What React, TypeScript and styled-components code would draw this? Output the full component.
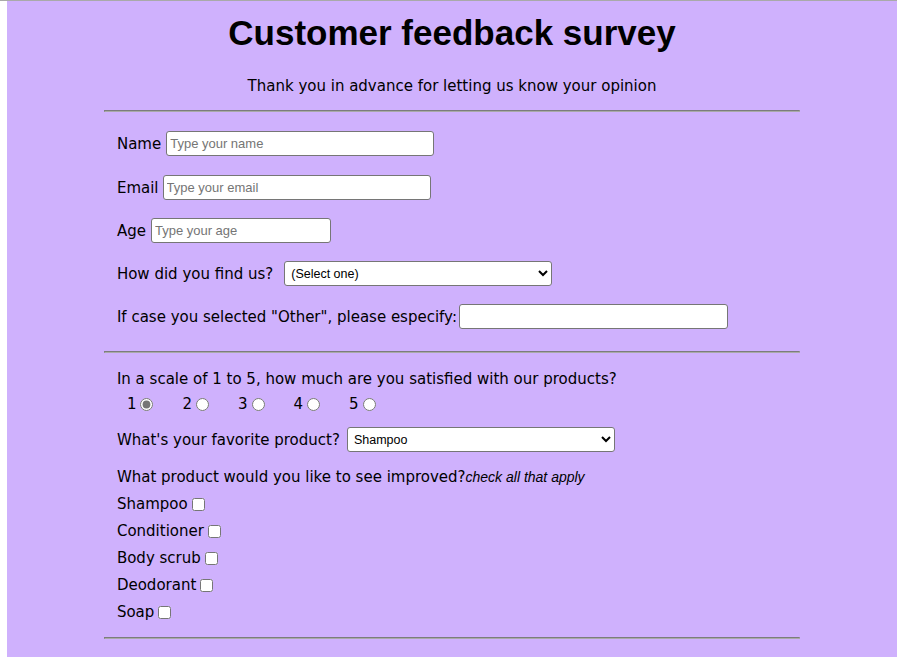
import React from "react";
import styled, { createGlobalStyle } from "styled-components";

const GlobalStyle = createGlobalStyle`
  html, body {
    margin: 0;
    padding: 0;
    background: #ffffff;
  }
  body {
    border-top: 1px solid #a9a9a9;
    font-family: "DejaVu Sans", Verdana, sans-serif;
    color: #000;
  }
`;

const Page = styled.div`
  margin-left: 7px;
  background: #cfb1fd;
  min-height: calc(100vh - 1px);
  overflow: hidden;
`;

const Title = styled.h1`
  margin: 12px 0 0;
  font-family: "Liberation Sans", Arial, sans-serif;
  font-size: 35px;
  line-height: 40px;
  font-weight: bold;
  text-align: center;
`;

const Subtitle = styled.p`
  margin: 24px 0 0;
  font-size: 15px;
  line-height: 18px;
  text-align: center;
`;

const Rule = styled.hr<{ $top?: number }>`
  width: 78%;
  margin: ${(p) => p.$top ?? 0}px auto 0;
  border-style: solid;
  border-width: 1px;
  border-color: #7c7c7c #a9a9a9 #a9a9a9 #7c7c7c;
  height: 0;
`;

const Section = styled.div<{ $pt: number; $pb: number }>`
  width: 78%;
  margin: 0 auto;
  box-sizing: border-box;
  padding: ${(p) => p.$pt}px 0 ${(p) => p.$pb}px 12px;
  font-size: 15px;
`;

const FieldRow = styled.div<{ $gap: number; $mb?: number; $mt?: number }>`
  display: flex;
  align-items: center;
  height: 25px;
  gap: ${(p) => p.$gap}px;
  margin-top: ${(p) => p.$mt ?? 0}px;
  margin-bottom: ${(p) => p.$mb ?? 0}px;
  line-height: 18px;
`;

const Label = styled.label`
  font-size: 15px;
  line-height: 18px;
  white-space: nowrap;
`;

const TextInput = styled.input<{ $w: number }>`
  box-sizing: border-box;
  width: ${(p) => p.$w}px;
  height: 25px;
  padding: 1px 3px;
  border: 1px solid #767676;
  border-radius: 3px;
  background: #fff;
  font-family: "Liberation Sans", Arial, sans-serif;
  font-size: 13px;
  &::placeholder {
    color: #757575;
  }
`;

const Select = styled.select`
  box-sizing: border-box;
  width: 268px;
  height: 25px;
  border: 1px solid #767676;
  border-radius: 3px;
  background: #fff;
  font-family: "Liberation Sans", Arial, sans-serif;
  font-size: 12.5px;
  color: #000;
  padding: 0 2px;
`;

const Line = styled.div<{ $mt?: number }>`
  font-size: 15px;
  line-height: 18px;
  margin-top: ${(p) => p.$mt ?? 0}px;
`;

const RadioRow = styled.div`
  display: flex;
  align-items: center;
  height: 18px;
  margin-top: 7px;
  padding-left: 10px;
  gap: 26px;
`;

const Option = styled.label`
  display: flex;
  align-items: center;
  font-size: 15px;
  line-height: 18px;
`;

const Radio = styled.input`
  width: 13px;
  height: 13px;
  margin: 0 3px 0 4px;
  accent-color: #767676;
`;

const Hint = styled.i`
  font-family: "Liberation Sans", Arial, sans-serif;
  font-size: 14px;
`;

const CheckRow = styled.label`
  display: flex;
  align-items: center;
  height: 18px;
  margin-top: 9px;
  font-size: 15px;
  line-height: 18px;
`;

const Check = styled.input`
  width: 13px;
  height: 13px;
  margin: 0 3px 0 4px;
`;

export default function App() {
  const products = ["Shampoo", "Conditioner", "Body scrub", "Deodorant", "Soap"];
  return (
    <>
      <GlobalStyle />
      <Page>
        <Title>Customer feedback survey</Title>
        <Subtitle>Thank you in advance for letting us know your opinion</Subtitle>
        <Rule $top={15} />
        <Section $pt={19} $pb={22}>
          <FieldRow $gap={5} $mb={19}>
            <Label>Name</Label>
            <TextInput $w={268} placeholder="Type your name" />
          </FieldRow>
          <FieldRow $gap={4} $mb={18}>
            <Label>Email</Label>
            <TextInput $w={268} placeholder="Type your email" />
          </FieldRow>
          <FieldRow $gap={5} $mb={18}>
            <Label>Age</Label>
            <TextInput $w={180} placeholder="Type your age" />
          </FieldRow>
          <FieldRow $gap={11} $mb={18}>
            <Label>How did you find us?</Label>
            <Select defaultValue="">
              <option value="">(Select one)</option>
              <option>Friends</option>
              <option>Social media</option>
              <option>Other</option>
            </Select>
          </FieldRow>
          <FieldRow $gap={2}>
            <Label>If case you selected "Other", please especify:</Label>
            <TextInput $w={269} />
          </FieldRow>
        </Section>
        <Rule />
        <Section $pt={17} $pb={16}>
          <Line>In a scale of 1 to 5, how much are you satisfied with our products?</Line>
          <RadioRow>
            {[1, 2, 3, 4, 5].map((n) => (
              <Option key={n}>
                {n}
                <Radio type="radio" name="scale" defaultChecked={n === 1} />
              </Option>
            ))}
          </RadioRow>
          <FieldRow $gap={7} $mt={14}>
            <Label>What's your favorite product?</Label>
            <Select defaultValue="Shampoo">
              {products.map((p) => (
                <option key={p}>{p}</option>
              ))}
            </Select>
          </FieldRow>
          <Line $mt={16}>
            What product would you like to see improved?<Hint>check all that apply</Hint>
          </Line>
          {products.map((p) => (
            <CheckRow key={p}>
              {p}
              <Check type="checkbox" />
            </CheckRow>
          ))}
        </Section>
        <Rule />
      </Page>
    </>
  );
}
